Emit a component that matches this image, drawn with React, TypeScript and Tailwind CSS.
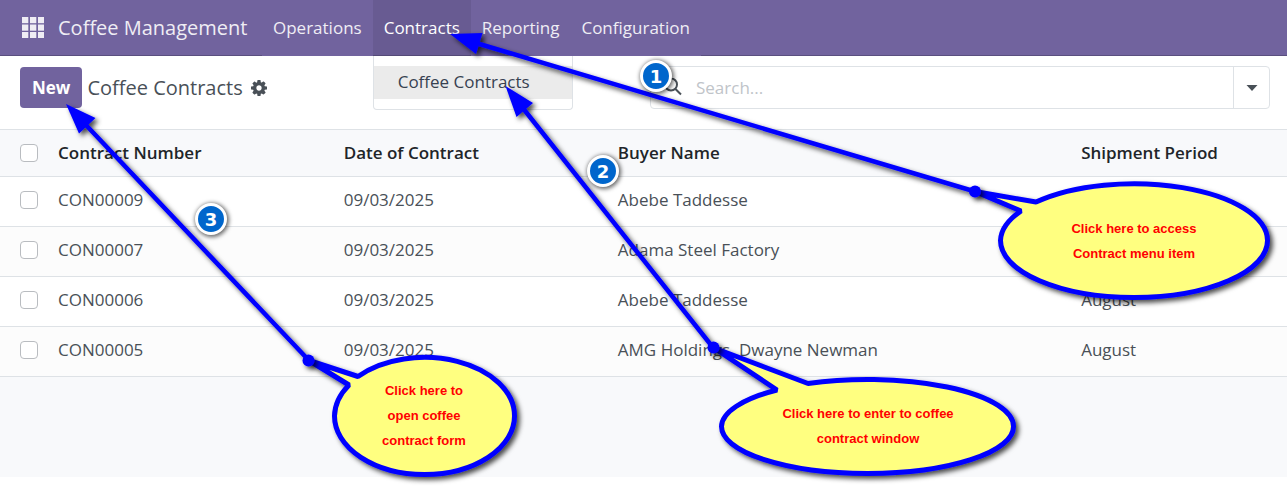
import React from "react";

type Contract = { number: string; date: string; buyer: string; period: string };

const contracts: Contract[] = [
  { number: "CON00009", date: "09/03/2025", buyer: "Abebe Taddesse", period: "" },
  { number: "CON00007", date: "09/03/2025", buyer: "Adama Steel Factory", period: "" },
  { number: "CON00006", date: "09/03/2025", buyer: "Abebe Taddesse", period: "August" },
  { number: "CON00005", date: "09/03/2025", buyer: "AMG Holdings, Dwayne Newman", period: "August" },
];

const checkboxClass =
  "block size-[18px] appearance-none rounded-[4px] border border-[#b9bcc0] bg-white checked:bg-[#71639e]";

function AppsIcon() {
  return (
    <svg viewBox="0 0 22 21" className="h-[21px] w-[22px]" fill="#efedf4" aria-hidden="true">
      {[0, 8, 16].map((x) => [0, 7.5, 15].map((y) => <rect key={`${x}-${y}`} x={x} y={y} width="6.300" height="6.200" />))}
    </svg>
  );
}

function GearIcon() {
  return (
    <svg viewBox="0 128 1536 1536" className="size-4" fill="#495057" aria-hidden="true">
      <path d="M1024 896q0-106-75-181t-181-75-181 75-75 181 75 181 181 75 181-75 75-181zm512-109v222q0 12-8 23t-20 13l-185 28q-19 54-39 91 35 50 107 138 10 12 10 25t-9 23q-27 37-99 108t-94 71q-12 0-26-9l-138-108q-44 23-91 38-16 136-29 186-7 28-36 28h-222q-14 0-24.500-8.500t-11.500-21.500l-28-184q-49-16-90-37l-141 107q-10 9-25 9-14 0-25-11-126-114-165-168-7-10-7-23 0-12 8-23 15-21 51-66.500t54-70.500q-27-50-41-99l-183-27q-13-2-21-12.500t-8-23.500v-222q0-12 8-23t19-13l186-28q14-46 39-92-40-57-107-138-10-12-10-24 0-10 9-23 26-36 98.500-107.500t94.500-71.500q13 0 26 10l138 107q44-23 91-38 16-136 29-186 7-28 36-28h222q14 0 24.500 8.500t11.500 21.500l28 184q49 16 90 37l142-107q9-9 24-9 13 0 25 10 129 119 165 170 7 8 7 22 0 12-8 23-15 21-51 66.500t-54 70.500q26 50 41 98l183 28q13 2 21 12.500t8 23.500z" />
    </svg>
  );
}

const navItem = "h-14 bg-[#71639e] px-[11px] hover:bg-[#685b92]";

function Navbar() {
  return (
    <header className="flex h-14 items-center border-b border-[#5a4f7f] bg-[#71639e] pl-[22px] text-[#efedf4]">
      <button type="button" aria-label="Applications">
        <AppsIcon />
      </button>
      <a href="#home" className="ml-3.5 w-[204px] whitespace-nowrap text-xl">
        Coffee Management
      </a>
      <nav className="flex h-14 text-[17px]">
        <button type="button" className={navItem}>Operations</button>
        <div className="relative">
          <button
            type="button"
            aria-expanded="true"
            className="h-14 bg-[#685b92] px-[11px] text-white shadow-[inset_0_-1px_0_#544a77]"
          >
            Contracts
          </button>
          <div className="absolute left-0 top-full z-10 w-[200px] rounded-b-[4px] border border-t-0 border-[#dee2e6] bg-white py-[10px]">
            <a href="#contracts" className="flex h-[33px] items-center bg-[#ebebeb] pl-6 text-[#374151]">
              Coffee Contracts
            </a>
          </div>
        </div>
        <button type="button" className={navItem}>Reporting</button>
        <button type="button" className={navItem}>Configuration</button>
      </nav>
    </header>
  );
}

function ControlPanel() {
  return (
    <div className="flex h-[73px] items-start justify-between pl-5 pr-[17px] pt-[10px]">
      <div className="flex items-center pt-px">
        <button type="button" className="h-[41px] rounded-[4px] bg-[#71639e] px-3 text-[17px] font-bold text-white">
          New
        </button>
        <h1 className="ml-[5px] text-xl text-[#495057]">Coffee Contracts</h1>
        <button type="button" aria-label="Actions" className="ml-2">
          <GearIcon />
        </button>
      </div>
      <form className="flex h-[43px] w-[620px] rounded-[4px] border border-[#dee2e6]">
        <label htmlFor="search" className="flex w-[45px] items-center pl-3" aria-label="Search">
          <svg viewBox="0 0 20 20" className="size-5" fill="none" stroke="#495057" strokeWidth="2" aria-hidden="true">
            <circle cx="8" cy="6.500" r="6" />
            <path d="M12.200 10.800 18 16.500" />
          </svg>
        </label>
        <input
          id="search"
          type="text"
          placeholder="Search..."
          className="min-w-0 flex-1 bg-transparent text-[17px] text-[#495057] outline-none placeholder:text-[#c0c4c9]"
        />
        <button
          type="button"
          aria-label="Search options"
          className="flex w-9 items-center justify-center border-l border-[#dee2e6]"
        >
          <svg viewBox="0 0 12 6" className="h-[6px] w-3" fill="#495057" aria-hidden="true">
            <path d="M0.500 0H11.500L6 6Z" />
          </svg>
        </button>
      </form>
    </div>
  );
}

const cellClass = "px-[10px] pb-[3px]";

function ContractTable() {
  return (
    <table className="w-full table-fixed border-collapse text-left text-[17px] text-[#495057]">
      <colgroup>
        <col className="w-12" />
        <col className="w-[22.200%]" />
        <col className="w-[21.300%]" />
        <col className="w-[36%]" />
        <col />
      </colgroup>
      <thead>
        <tr className="h-[47px] border-y border-[#dee2e6] bg-[#f8f9fb] text-[#212529]">
          <th className="pl-5">
            <input type="checkbox" aria-label="Select all" className={checkboxClass} />
          </th>
          <th className="px-[10px] font-semibold">Contract Number</th>
          <th className="px-[10px] font-semibold">Date of Contract</th>
          <th className="px-[10px] font-semibold">Buyer Name</th>
          <th className="px-[10px] font-semibold">Shipment Period</th>
        </tr>
      </thead>
      <tbody>
        {contracts.map((c) => (
          <tr key={c.number} className="h-[50px] border-b border-[#dee2e6] even:bg-[#fcfcfc]">
            <td className="pb-[3px] pl-5">
              <input type="checkbox" aria-label={`Select ${c.number}`} className={checkboxClass} />
            </td>
            <td className={cellClass}>{c.number}</td>
            <td className={cellClass}>{c.date}</td>
            <td className={cellClass}>{c.buyer}</td>
            <td className={cellClass}>{c.period}</td>
          </tr>
        ))}
      </tbody>
    </table>
  );
}

const noteClass =
  "absolute text-center font-['Liberation_Sans',Arial,sans-serif] text-[13px] font-bold leading-[25px] text-[#ff0000]";
const badgeClass =
  "absolute flex size-8 items-center justify-center rounded-full border-[3px] border-white bg-[#0066cc] pt-px font-['DejaVu_Sans',Verdana,sans-serif] text-[18px] font-bold text-white shadow-[1px_1px_4px_1px_rgba(0,0,0,0.6)]";

function Annotations() {
  return (
    <div className="pointer-events-none absolute left-0 top-0 z-20">
      <svg width="1287" height="488" viewBox="0 0 1287 488" className="max-w-none" aria-hidden="true">
        <defs>
          <filter id="shade" filterUnits="userSpaceOnUse" x="0" y="0" width="1287" height="488">
            <feDropShadow dx="3" dy="3" stdDeviation="2.500" floodColor="#000" floodOpacity="0.7" />
          </filter>
        </defs>
        <g fill="#ffff80" stroke="#0000ff" strokeWidth="5" strokeLinejoin="bevel" filter="url(#shade)">
          <path d="M975 191.500 1036 202A133.500 57 0 0 1 1267.500 240.500A133.500 57 0 0 1 1000.500 240.500A133.500 57 0 0 1 1021 211Z" />
          <path d="M714 348 808 383.500A146 47 0 0 1 1013.500 426.500A146 47 0 0 1 721.500 426.500A146 47 0 0 1 777 390Z" />
          <path d="M309 360.500 358 376.500A90 58.500 0 0 1 514.500 416A90 58.500 0 0 1 334.500 416A90 58.500 0 0 1 349 385Z" />
        </g>
        <g stroke="#0000ff" strokeWidth="4.500" filter="url(#shade)">
          <path d="M975 191.500 476 43M713 347.500 522 107M309 360.500 85 124" />
          <g fill="#0000ff" stroke="none">
            <path d="M450 34 482.500 33 476 54Z" />
            <path d="M505.500 86 533 103 516.500 117Z" />
            <path d="M66 104 95.500 118 79 133.500Z" />
            <circle cx="975" cy="191.500" r="6" />
            <circle cx="713.500" cy="347.500" r="6" />
            <circle cx="308.500" cy="360.500" r="6" />
          </g>
        </g>
      </svg>
      <p className={`${noteClass} left-[1054px] top-[216px] w-40`}>
        Click here to access
        <br />
        Contract menu item
      </p>
      <p className={`${noteClass} left-[768px] top-[401px] w-[200px]`}>
        Click here to enter to coffee
        <br />
        contract window
      </p>
      <p className={`${noteClass} left-[364px] top-[378px] w-[120px]`}>
        Click here to
        <br />
        open coffee
        <br />
        contract form
      </p>
      <span className={`${badgeClass} left-[640px] top-[60px]`}>1</span>
      <span className={`${badgeClass} left-[587px] top-[155px]`}>2</span>
      <span className={`${badgeClass} left-[195px] top-[203px]`}>3</span>
    </div>
  );
}

export default function App() {
  return (
    <div className="relative overflow-hidden bg-white pb-[11px] font-['Open_Sans','Segoe_UI',sans-serif]">
      <Navbar />
      <main className="bg-[#f8f9fb]">
        <div className="bg-white">
          <ControlPanel />
          <ContractTable />
        </div>
        <div className="h-[100px]" />
      </main>
      <Annotations />
    </div>
  );
}
